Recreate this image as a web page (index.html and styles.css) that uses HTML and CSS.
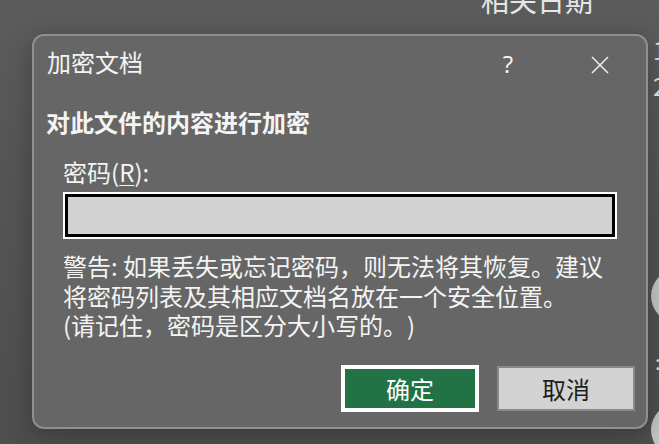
FILE: index.html
```html
<!DOCTYPE html>
<html lang="zh-CN">
<head>
<meta charset="utf-8">
<title>加密文档</title>
<link rel="stylesheet" href="styles.css">
</head>
<body>
<div class="desktop">
  <div class="backdrop">
    <span class="bg-heading">相关日期</span>
    <span class="bg-num n1">1</span>
    <span class="bg-num n2">2</span>
    <span class="bg-circle c1"></span>
    <span class="bg-mark">:</span>
    <span class="bg-circle c2"></span>
  </div>
  <div class="dialog">
    <div class="titlebar">
      <span class="title">加密文档</span>
      <span class="tb-btn help">?</span>
      <span class="tb-btn close">
        <svg width="18" height="18" viewBox="0 0 18 18"><path d="M1 1 L17 17 M17 1 L1 17" stroke="#eeeeee" stroke-width="1.5" fill="none"/></svg>
      </span>
    </div>
    <div class="heading">对此文件的内容进行加密</div>
    <div class="form">
      <label class="label" for="pw">密码(<u>R</u>):</label>
      <div class="field"><input id="pw" class="input" type="password"></div>
      <p class="warning">警告: 如果丢失或忘记密码，则无法将其恢复。建议<br>将密码列表及其相应文档名放在一个安全位置。<br>(请记住，密码是区分大小写的。)</p>
    </div>
    <div class="footer">
      <button class="btn ok">确定</button>
      <button class="btn cancel">取消</button>
    </div>
  </div>
</div>
</body>
</html>
```
FILE: styles.css
```css
html, body {
  margin: 0;
  padding: 0;
}
body {
  width: 659px;
  height: 444px;
  overflow: hidden;
  background: #535353;
  font-family: "Noto Sans CJK SC", "Noto Sans", sans-serif;
  text-spacing-trim: space-all;
}
.desktop {
  position: relative;
  width: 659px;
  height: 444px;
  overflow: hidden;
  box-sizing: border-box;
  padding: 34px 0 0 32px;
  background: linear-gradient(180deg, #5c5c5c 0%, #555555 40%, #4e4e4e 100%);
}
.backdrop {
  position: absolute;
  inset: 0;
  color: #e6e6e6;
}
.bg-heading {
  position: absolute;
  left: 481px;
  top: -17px;
  font-size: 28px;
  line-height: 34px;
}
.bg-num {
  position: absolute;
  left: 653px;
  font-size: 24px;
  line-height: 28px;
}
.n1 { top: 36px; }
.n2 { top: 72px; }
.bg-circle {
  position: absolute;
  left: 651px;
  width: 54px;
  height: 54px;
  border-radius: 50%;
  background: #c4c4c4;
}
.c1 { top: 269px; }
.c2 { top: 403px; }
.bg-mark {
  position: absolute;
  left: 655px;
  top: 348px;
  font-size: 20px;
  line-height: 28px;
  color: #dddddd;
}
.dialog {
  position: relative;
  z-index: 1;
  width: 616px;
  height: 395px;
  box-sizing: border-box;
  border: 2px solid #8f8f8f;
  border-radius: 12px;
  background: #666666;
  box-shadow: 0 6px 26px rgba(0, 0, 0, 0.28);
  color: #f4f4f4;
  display: flex;
  flex-direction: column;
}
.titlebar {
  height: 57px;
  display: flex;
  align-items: center;
  padding: 0 23px 0 13px;
}
.title {
  flex: 1;
  font-size: 24px;
  line-height: 30px;
  position: relative;
  top: -3px;
}
.tb-btn {
  width: 46px;
  height: 30px;
  display: flex;
  align-items: center;
  justify-content: center;
}
.help {
  margin-right: 46px;
  font-family: "Open Sans", "Noto Sans", sans-serif;
  font-size: 24px;
  line-height: 30px;
  position: relative;
  top: -1px;
}
.heading {
  margin-top: 14px;
  padding-left: 12px;
  font-size: 24px;
  line-height: 30px;
  font-weight: bold;
}
.form {
  padding-left: 29px;
  display: flex;
  flex-direction: column;
  align-items: flex-start;
}
.label {
  margin-top: 20px;
  font-size: 24px;
  line-height: 30px;
}
.label u {
  text-underline-offset: 3px;
  text-decoration-thickness: 1px;
}
.field {
  margin-top: 5px;
  border: 2px solid #ffffff;
}
.input {
  display: block;
  width: 550px;
  height: 43px;
  box-sizing: border-box;
  margin: 0;
  border: 3px solid #000000;
  background: #d3d3d3;
  padding: 0 6px;
  font-size: 20px;
  outline: none;
}
.warning {
  margin: 12px 0 0 0;
  font-size: 24px;
  line-height: 29.5px;
  white-space: nowrap;
}
.footer {
  margin-top: auto;
  padding: 0 11px 15px 0;
  display: flex;
  justify-content: flex-end;
  align-items: center;
  gap: 18px;
}
.btn {
  width: 138px;
  box-sizing: border-box;
  margin: 0;
  padding: 0;
  font-family: "Noto Sans CJK SC", "Noto Sans", sans-serif;
  font-size: 24px;
  line-height: 30px;
  cursor: default;
}
.ok {
  height: 47px;
  border: 4px solid #ffffff;
  background: #217346;
  color: #ffffff;
}
.cancel {
  height: 45px;
  border: 2px solid #8a8a8a;
  background: #d3d3d3;
  color: #1e1e1e;
}
```
